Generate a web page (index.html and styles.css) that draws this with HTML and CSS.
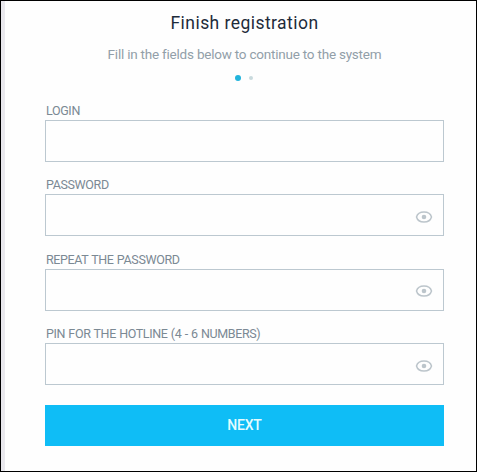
FILE: index.html
```
<!DOCTYPE html>
<html lang="en">
	<head>
		<meta charset="utf-8">
		<title>Finish registration</title>
		<link rel="stylesheet" href="styles.css">
	</head>

	<body>
		<svg class="sprite">
			<symbol id="eye" viewBox="0 0 18 14">
				<path d="M1.500 7C2.400 3.700 5.400 2 9 2S15.600 3.700 16.500 7C15.600 10.300 12.600 12 9 12S2.400 10.300 1.500 7Z" fill="none" stroke="currentColor" stroke-width="1.500"/>
				<circle cx="9" cy="7" r="2.300" fill="currentColor"/>
			</symbol>
		</svg>

		<div class="frame">
			<form class="registration">
				<h1 class="title">Finish registration</h1>
				<p class="subtitle">Fill in the fields below to continue to the system</p>
				<div class="steps">
					<span class="step active"></span>
					<span class="step"></span>
				</div>

				<div class="field">
					<label class="label" for="login">LOGIN</label>
					<div class="box">
						<input class="input" id="login" type="text">
					</div>
				</div>
				<div class="field">
					<label class="label" for="password">PASSWORD</label>
					<div class="box">
						<input class="input" id="password" type="password">
						<svg class="eye"><use href="#eye"/></svg>
					</div>
				</div>
				<div class="field">
					<label class="label" for="repeat">REPEAT THE PASSWORD</label>
					<div class="box">
						<input class="input" id="repeat" type="password">
						<svg class="eye"><use href="#eye"/></svg>
					</div>
				</div>
				<div class="field">
					<label class="label" for="pin">PIN FOR THE HOTLINE (4 - 6 NUMBERS)</label>
					<div class="box">
						<input class="input" id="pin" type="password">
						<svg class="eye"><use href="#eye"/></svg>
					</div>
				</div>

				<button class="next" type="button">NEXT</button>
			</form>
		</div>
	</body>
</html>
```
FILE: styles.css
```
* {
	box-sizing: border-box;
}

body {
	margin: 0;
	overflow: hidden;
	font-family: Roboto, "Liberation Sans", sans-serif;
}

.sprite {
	display: none;
}

.frame {
	height: 472px;
	border: 1px solid #000;
	background: linear-gradient(to right, #e9e8ed 4px, #fefefe 4px);
}

.registration {
	display: flex;
	flex-direction: column;
	padding: 11px 32px 0 44px;
}

.title {
	margin: 0;
	line-height: 22px;
	font-size: 17.5px;
	font-weight: 400;
	letter-spacing: 0.45px;
	text-align: center;
	color: #1d2b3a;
}

.subtitle {
	margin: 11px 0 0;
	line-height: 18px;
	font-size: 13.5px;
	letter-spacing: -0.22px;
	text-align: center;
	white-space: nowrap;
	color: #929fa9;
}

.steps {
	display: flex;
	justify-content: center;
	align-items: center;
	gap: 8px;
	height: 6px;
	margin: 12px 0 22px;
	padding-right: 1px;
}

.step {
	width: 4px;
	height: 4px;
	border-radius: 50%;
	background: #c9dadd;
}

.step.active {
	width: 6px;
	height: 6px;
	background: #22b4dc;
}

.field {
	height: 74.4px;
}

.label {
	display: block;
	height: 17px;
	line-height: 16px;
	padding-left: 1px;
	font-size: 12.5px;
	letter-spacing: -0.36px;
	word-spacing: 0.5px;
	white-space: nowrap;
	color: #7b8994;
}

.box {
	display: flex;
	align-items: center;
	height: 42px;
	padding-right: 10px;
	border: 1px solid #bcc8d0;
}

.input {
	flex: 1;
	min-width: 0;
	height: 100%;
	padding: 0 12px;
	border: 0;
	outline: 0;
	background: none;
}

.eye {
	width: 18px;
	height: 14px;
	margin-top: 3.4px;
	color: #bcc5cb;
}

.next {
	height: 41px;
	margin-top: 4.4px;
	padding: 0;
	border: 0;
	background: #0fbdf6;
	font-family: inherit;
	font-size: 14px;
	font-weight: 500;
	letter-spacing: -0.2px;
	color: #e4fcff;
}
```
